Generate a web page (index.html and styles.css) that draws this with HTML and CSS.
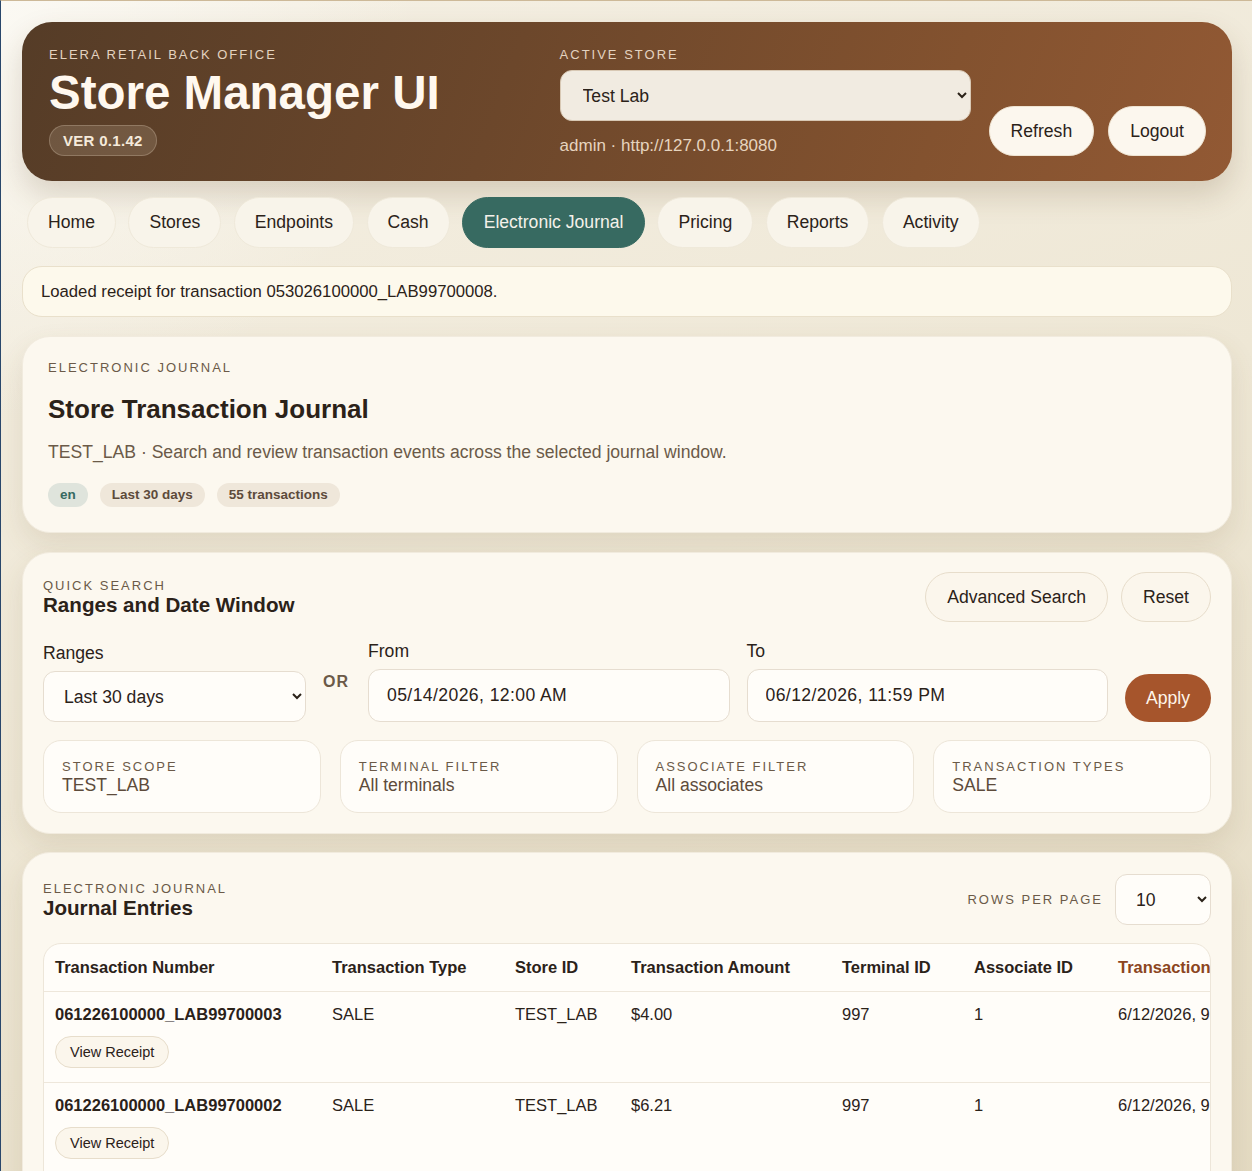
FILE: index.html
```html
<!DOCTYPE html>
<html>

<head>
    <meta charset="utf-8">
    <title>Store Manager UI</title>
    <link rel="stylesheet" href="styles.css">
</head>

<body>
    <div class="page">
        <!-- top bar -->
        <header class="topbar">
            <div class="brand">
                <div class="brand-eyebrow">ELERA RETAIL BACK OFFICE</div>
                <h1 class="brand-title">Store Manager UI</h1>
                <span class="version">VER 0.1.42</span>
            </div>
            <div class="store-box">
                <div class="brand-eyebrow">ACTIVE STORE</div>
                <select class="store-select">
                    <option>Test Lab</option>
                </select>
                <div class="session">admin · http://127.0.0.1:8080</div>
            </div>
            <div class="top-actions">
                <button class="top-btn">Refresh</button>
                <button class="top-btn">Logout</button>
            </div>
        </header>

        <!-- main nav -->
        <nav class="tabs">
            <a class="tab">Home</a>
            <a class="tab">Stores</a>
            <a class="tab">Endpoints</a>
            <a class="tab">Cash</a>
            <a class="tab active">Electronic Journal</a>
            <a class="tab">Pricing</a>
            <a class="tab">Reports</a>
            <a class="tab">Activity</a>
        </nav>

        <div class="notice">Loaded receipt for transaction 053026100000_LAB99700008.</div>

        <!-- intro card -->
        <section class="card intro">
            <div class="eyebrow">ELECTRONIC JOURNAL</div>
            <h2 class="intro-title">Store Transaction Journal</h2>
            <p class="intro-text">TEST_LAB · Search and review transaction events across the selected journal window.</p>
            <div class="chips">
                <span class="chip chip-lang">en</span>
                <span class="chip">Last 30 days</span>
                <span class="chip">55 transactions</span>
            </div>
        </section>

        <!-- quick search -->
        <section class="card search">
            <div class="card-head">
                <div>
                    <div class="eyebrow">QUICK SEARCH</div>
                    <h3 class="card-title">Ranges and Date Window</h3>
                </div>
                <div class="head-actions">
                    <button class="ghost-btn">Advanced Search</button>
                    <button class="ghost-btn">Reset</button>
                </div>
            </div>

            <div class="range-row">
                <label class="field">
                    <span class="field-label">Ranges</span>
                    <select class="control">
                        <option>Last 30 days</option>
                    </select>
                </label>
                <div class="or">OR</div>
                <label class="field">
                    <span class="field-label">From</span>
                    <input class="control date" type="text" value="05/14/2026, 12:00 AM">
                </label>
                <label class="field">
                    <span class="field-label">To</span>
                    <input class="control date" type="text" value="06/12/2026, 11:59 PM">
                </label>
                <button class="apply-btn">Apply</button>
            </div>

            <div class="filters">
                <div class="filter">
                    <div class="eyebrow">STORE SCOPE</div>
                    <div class="filter-value">TEST_LAB</div>
                </div>
                <div class="filter">
                    <div class="eyebrow">TERMINAL FILTER</div>
                    <div class="filter-value">All terminals</div>
                </div>
                <div class="filter">
                    <div class="eyebrow">ASSOCIATE FILTER</div>
                    <div class="filter-value">All associates</div>
                </div>
                <div class="filter">
                    <div class="eyebrow">TRANSACTION TYPES</div>
                    <div class="filter-value">SALE</div>
                </div>
            </div>
        </section>

        <!-- journal table -->
        <section class="card entries">
            <div class="card-head">
                <div>
                    <div class="eyebrow">ELECTRONIC JOURNAL</div>
                    <h3 class="card-title">Journal Entries</h3>
                </div>
                <div class="rows-box">
                    <span class="eyebrow">ROWS PER PAGE</span>
                    <select class="control rows-select">
                        <option>10</option>
                    </select>
                </div>
            </div>

            <div class="table-wrap">
                <table class="journal">
                    <colgroup>
                        <col style="width: 277px">
                        <col style="width: 183px">
                        <col style="width: 116px">
                        <col style="width: 211px">
                        <col style="width: 132px">
                        <col style="width: 144px">
                        <col style="width: 230px">
                    </colgroup>
                    <thead>
                        <tr>
                            <th>Transaction Number</th>
                            <th>Transaction Type</th>
                            <th>Store ID</th>
                            <th>Transaction Amount</th>
                            <th>Terminal ID</th>
                            <th>Associate ID</th>
                            <th class="sorted">Transaction Date</th>
                        </tr>
                    </thead>
                    <tbody>
                        <tr>
                            <td>
                                <div class="tx-no">061226100000_LAB99700003</div>
                                <button class="receipt-btn">View Receipt</button>
                            </td>
                            <td>SALE</td>
                            <td>TEST_LAB</td>
                            <td>$4.00</td>
                            <td>997</td>
                            <td>1</td>
                            <td>6/12/2026, 9:42:18 PM</td>
                        </tr>
                        <tr>
                            <td>
                                <div class="tx-no">061226100000_LAB99700002</div>
                                <button class="receipt-btn">View Receipt</button>
                            </td>
                            <td>SALE</td>
                            <td>TEST_LAB</td>
                            <td>$6.21</td>
                            <td>997</td>
                            <td>1</td>
                            <td>6/12/2026, 9:31:05 PM</td>
                        </tr>
                        <tr>
                            <td>
                                <div class="tx-no">061226100000_LAB99700001</div>
                                <button class="receipt-btn">View Receipt</button>
                            </td>
                            <td>SALE</td>
                            <td>TEST_LAB</td>
                            <td>$2.49</td>
                            <td>997</td>
                            <td>1</td>
                            <td>6/12/2026, 9:12:40 PM</td>
                        </tr>
                    </tbody>
                </table>
            </div>
        </section>
    </div>
</body>

</html>
```

FILE: styles.css
```css
* {
    box-sizing: border-box;
}

html,
body {
    margin: 0;
    padding: 0;
}

body {
    font-family: "Liberation Sans", Arial, sans-serif;
    font-size: 17.6px;
    color: #2b2219;
    border-top: 1px solid #cdb998;
    border-left: 1px solid #29476b;
    background:
        radial-gradient(circle at 0 0, #fbf9f3 0, rgba(251, 249, 243, 0) 420px),
        linear-gradient(160deg, #f5f0e4 0%, #eee7d5 45%, #e3d9c0 100%);
    min-height: 1171px;
}

button,
select,
input {
    font-family: inherit;
    color: inherit;
}

.page {
    padding: 21px 20px 40px 21px;
    display: flex;
    flex-direction: column;
    gap: 18px;
}

/* top bar */
.topbar {
    display: flex;
    align-items: stretch;
    padding: 24px 26px 25px 27px;
    border-radius: 30px;
    background: linear-gradient(110deg, #553c27 0%, #6c472b 40%, #83522f 75%, #925934 100%);
    box-shadow: 0 14px 30px rgba(90, 60, 30, 0.18);
    color: #fff8ef;
    margin-bottom: -2px;
}

.brand {
    flex: 1;
}

.brand-eyebrow {
    font-size: 13px;
    letter-spacing: 2px;
    line-height: 16px;
    color: #e4d3c0;
    padding-top: 1px;
}

.brand-title {
    margin: 3px 0 6px;
    font-size: 47.5px;
    line-height: 53px;
    font-weight: bold;
    color: #fff8ef;
}

.version {
    display: inline-block;
    padding: 6px 13px;
    border-radius: 16px;
    border: 1px solid rgba(255, 240, 220, 0.22);
    background: rgba(255, 240, 220, 0.14);
    font-size: 15px;
    line-height: 17px;
    font-weight: bold;
    letter-spacing: 0.3px;
    color: #f5eadb;
}

.store-box {
    width: 411px;
    margin-right: 18px;
}

.store-select {
    display: block;
    width: 100%;
    height: 51px;
    margin-top: 7px;
    padding: 0 14px 0 18px;
    border-radius: 12px;
    border: 1px solid #d8c8b4;
    background-color: #f1ebe1;
    font-size: 17.6px;
    color: #2b2219;
}

.session {
    margin-top: 15px;
    font-size: 17px;
    color: #e6d4bf;
}

.top-actions {
    align-self: flex-end;
    display: flex;
    gap: 14px;
}

.top-btn {
    height: 50px;
    padding: 0 21px;
    border-radius: 25px;
    border: 1px solid #efe4d2;
    background: #fcf7ee;
    font-size: 17.6px;
    color: #2b2219;
}

/* nav */
.tabs {
    display: flex;
    gap: 12.5px;
    padding-left: 5px;
}

.tab {
    height: 51px;
    line-height: 49px;
    padding: 0 20px;
    border-radius: 26px;
    border: 1px solid #efe9da;
    background: #f8f4ea;
    font-size: 17.6px;
    color: #2b2219;
    cursor: pointer;
}

.tab.active {
    padding: 0 20.5px;
    background: #376a61;
    border-color: #376a61;
    color: #f4f1ea;
}

.notice {
    height: 51px;
    line-height: 49px;
    padding: 0 18px;
    border-radius: 20px;
    border: 1px solid #e9e0cb;
    background: #fdf9ec;
    font-size: 16.7px;
    margin-bottom: 1px;
}

/* cards */
.card {
    border-radius: 28px;
    background: #fcf8ef;
    border: 1px solid #f1ebde;
    box-shadow: 0 12px 28px rgba(110, 85, 45, 0.12);
}

.eyebrow {
    font-size: 13px;
    line-height: 16px;
    letter-spacing: 2px;
    color: #6b5a48;
}

.intro {
    padding: 23px 25px 25px;
    margin-bottom: 1px;
}

.intro-title {
    margin: 18px 0 0;
    font-size: 26px;
    line-height: 30px;
}

.intro-text {
    margin: 18px 0 0;
    font-size: 17.6px;
    line-height: 20px;
    color: #6b5a48;
}

.chips {
    display: flex;
    gap: 12px;
    margin-top: 21px;
}

.chip {
    height: 24px;
    line-height: 24px;
    padding: 0 12px;
    border-radius: 12px;
    background: #efe7da;
    font-size: 13.5px;
    font-weight: bold;
    color: #5d4b3b;
}

.chip-lang {
    background: #dfe4dc;
    color: #376a61;
}

.search {
    padding: 19px 20px 20px 20px;
}

.card-head {
    display: flex;
    justify-content: space-between;
    align-items: center;
}

.card-title {
    margin: 0;
    font-size: 20.6px;
    line-height: 22px;
}

.head-actions {
    display: flex;
    gap: 13px;
}

.ghost-btn {
    height: 50px;
    padding: 0 21px;
    border-radius: 25px;
    border: 1px solid #e7ddcb;
    background: #fbf6ec;
    font-size: 17.6px;
    color: #2b2219;
}

/* ranges row */
.range-row {
    display: grid;
    grid-template-columns: 263px 28px 1fr 1fr 86px;
    gap: 17px;
    align-items: end;
    margin-top: 19px;
}

.field {
    display: flex;
    flex-direction: column;
    gap: 8px;
}

.field-label {
    font-size: 17.6px;
    line-height: 20px;
}

.control {
    height: 53px;
    padding: 0 18px;
    border-radius: 12px;
    border: 1px solid #e6ddd0;
    background-color: #fffdf9;
    font-size: 17.6px;
    color: #2b2219;
}

select.control {
    height: 51px;
    padding: 0 10px 0 16px;
}

.date {
    letter-spacing: 0.4px;
}

.or {
    align-self: center;
    font-size: 16px;
    font-weight: bold;
    letter-spacing: 1px;
    color: #6b5a48;
}

.apply-btn {
    height: 48px;
    border: none;
    border-radius: 24px;
    background: #a6552c;
    color: #fff5ea;
    font-size: 17.6px;
}

.filters {
    display: grid;
    grid-template-columns: repeat(4, 1fr);
    gap: 19px;
    margin-top: 18px;
}

.filter {
    height: 73px;
    padding: 18px 18px 0;
    border-radius: 18px;
    border: 1px solid #ede6d9;
    background: #fffdf9;
}

.filter-value {
    font-size: 17.6px;
    line-height: 20px;
    color: #5d4b3b;
}

/* journal entries */
.entries {
    padding: 21px 20px 20px 20px;
}

.rows-box {
    display: flex;
    align-items: center;
    gap: 12px;
}

.rows-select {
    width: 96px;
    height: 51px;
    padding: 0 8px 0 18px;
}

.table-wrap {
    margin-top: 18px;
    border-radius: 18px;
    border: 1px solid #ede6d9;
    background: #fffdf9;
    overflow: hidden;
}

.journal {
    table-layout: fixed;
    width: 1293px;
    border-collapse: collapse;
}

.journal th {
    text-align: left;
    padding: 13px 11px 14px;
    font-size: 16.5px;
    line-height: 20px;
    border-bottom: 1px solid #eee7db;
    white-space: nowrap;
}

.journal th.sorted {
    color: #8c4521;
}

.journal td {
    vertical-align: top;
    padding: 12px 11px 14px;
    font-size: 16.5px;
    line-height: 20px;
    border-bottom: 1px solid #eee7db;
    white-space: nowrap;
}

.tx-no {
    font-weight: bold;
}

.receipt-btn {
    margin-top: 12px;
    height: 32px;
    padding: 0 14px;
    border-radius: 16px;
    border: 1px solid #e7ddcb;
    background: #fbf6ec;
    font-size: 14.5px;
    color: #2b2219;
}
```
